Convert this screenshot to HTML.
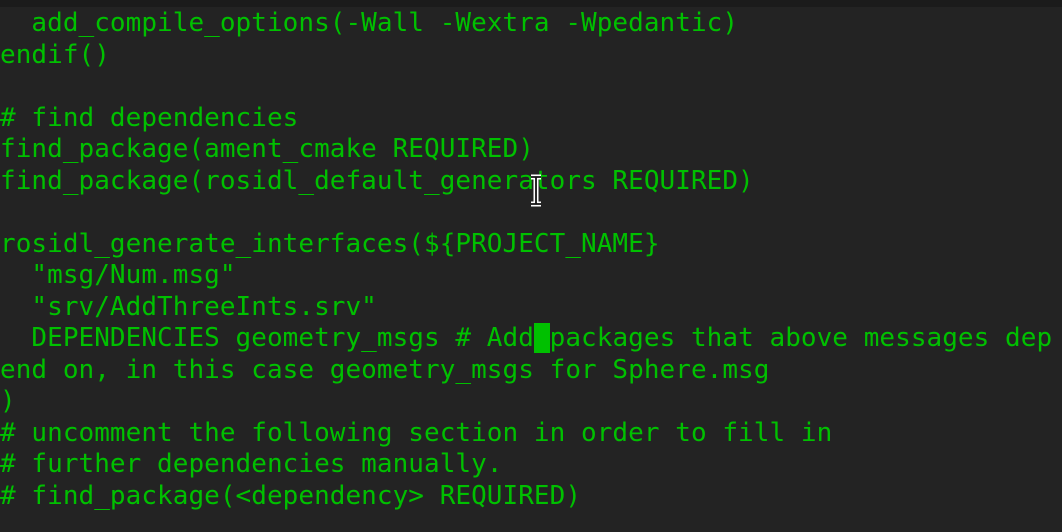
<html><head><style>
body{margin:0;width:1062px;height:532px;background:#232323;overflow:hidden;position:relative}
.top{position:absolute;left:0;top:0;width:1062px;height:7px;background:#1b1b1b}
pre{position:absolute;left:0;top:8px;margin:0;font-family:"DejaVu Sans Mono","Liberation Mono",monospace;font-size:26px;line-height:31.5px;color:#00c000;letter-spacing:0.05px}
.cur{background:#00c000;color:#232323}
.ib{position:absolute;left:528px;top:174px;width:16px;height:33px}
</style></head><body><div class="top"></div>
<pre>  add_compile_options(-Wall -Wextra -Wpedantic)
endif()

# find dependencies
find_package(ament_cmake REQUIRED)
find_package(rosidl_default_generators REQUIRED)

rosidl_generate_interfaces(${PROJECT_NAME}
  "msg/Num.msg"
  "srv/AddThreeInts.srv"
  DEPENDENCIES geometry_msgs # Add<span class="cur"> </span>packages that above messages dep
end on, in this case geometry_msgs for Sphere.msg
)
# uncomment the following section in order to fill in
# further dependencies manually.
# find_package(&lt;dependency&gt; REQUIRED)</pre>
<svg class="ib" viewBox="0 0 16 33"><path d="M3 3h10M3 30h10M8 3v27" stroke="#fff" stroke-width="5" fill="none"/><path d="M3 3h10M3 30h10M8 3v27" stroke="#111" stroke-width="1.8" fill="none"/></svg>
</body></html>
